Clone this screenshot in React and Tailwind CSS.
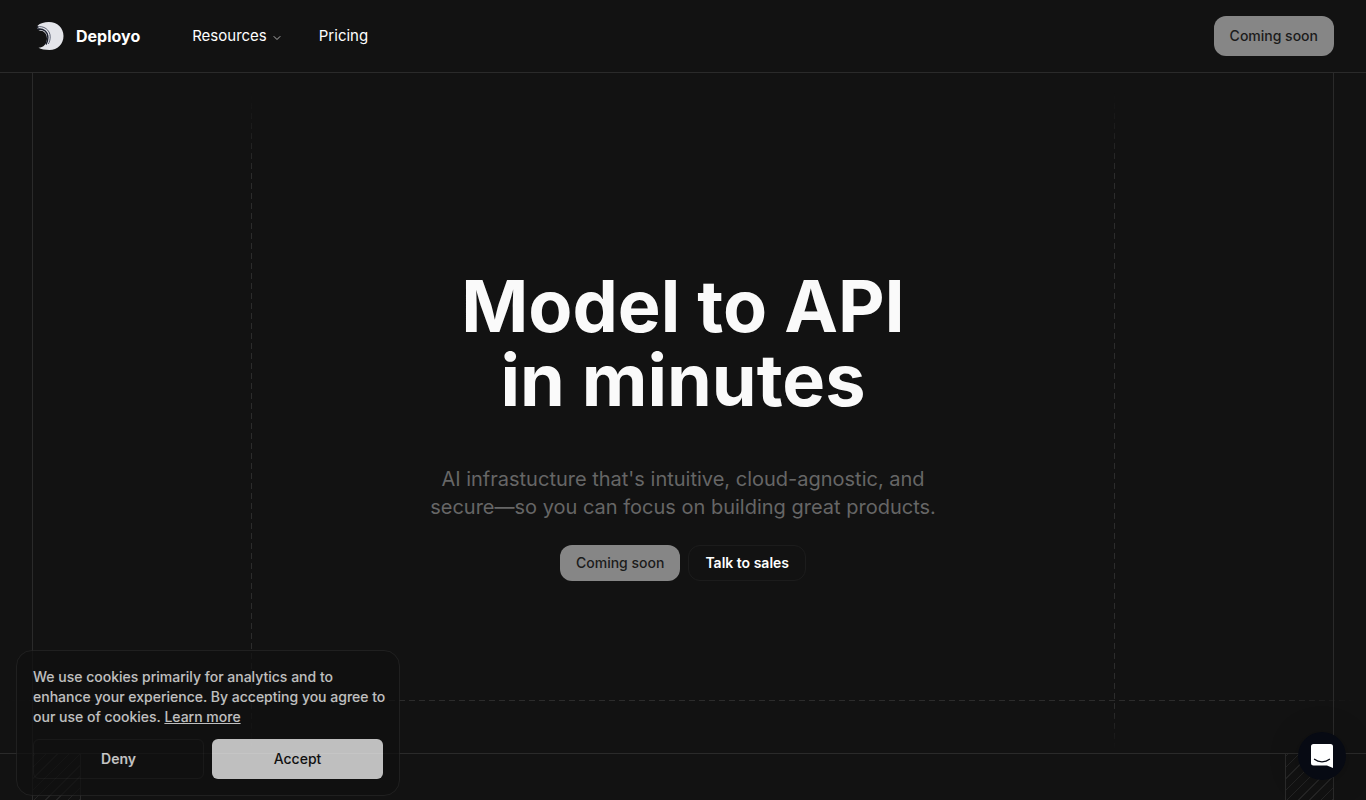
import { useState } from 'react';
import { ChevronDown } from 'lucide-react';

const Logo = () => (
  <svg viewBox="0 0 28 28" className="size-7" aria-hidden="true">
    <path
      d="M1.500 3.700C4 1.200 8.500 0 12.800 0C21.500 0 27.500 6 27.500 14S21.500 28 13.500 28C9 28 5 27.500 2.500 25.800C7.500 25.800 11 21.500 11 16.500C11 11.500 7.500 8.200 2.500 8.600L4.500 7.600C3.500 6.900 2.200 6.500 0.800 6.600L2.800 5.200Z"
      fill="#e4e5ea"
    />
    <path d="M0.800 5C7.500 3.200 14.200 7.800 14.200 14.800C14.200 17.500 13.500 20 12.300 22" fill="none" stroke="#3a4054" strokeWidth="0.8" />
    <path d="M1.500 7.200C7.500 6 11.800 10 11.900 15.500C11.900 18 11.300 20.500 10 22.500" fill="none" stroke="#1a1f2e" strokeWidth="1.400" />
  </svg>
);

const Header = () => (
  <header className="border-b border-[#2a2a2a]">
    <div className="flex h-18 items-center justify-between px-8">
      <div className="flex items-center">
        <a href="#" className="flex items-center gap-3 pl-1 font-bold">
          <Logo />
          Deployo
        </a>
        <nav className="ml-13 flex items-center gap-9 text-[15px]">
          <button type="button" className="flex items-center gap-1">
            Resources
            <ChevronDown className="mt-1 size-3 text-[#b0b0b0]" />
          </button>
          <a href="#pricing">Pricing</a>
        </nav>
      </div>
      <button type="button" className="h-10 rounded-xl bg-[#868686] px-4 text-sm font-medium text-[#1b1b1b]">
        Coming soon
      </button>
    </div>
  </header>
);

// Dashed guides that fade out at both ends
const Guides = () => (
  <div className="pointer-events-none absolute inset-0" aria-hidden="true">
    <div className="absolute top-5 bottom-1 left-[218px] w-px bg-[repeating-linear-gradient(to_bottom,#2c2c2c_0_6px,transparent_6px_10px)] mask-[linear-gradient(to_bottom,transparent,black_80px,black_calc(100%-40px),transparent)]" />
    <div className="absolute top-5 right-[218px] bottom-1 w-px bg-[repeating-linear-gradient(to_bottom,#2c2c2c_0_6px,transparent_6px_10px)] mask-[linear-gradient(to_bottom,transparent,black_80px,black_calc(100%-40px),transparent)]" />
    <div className="absolute -right-6 bottom-[52px] -left-6 h-px bg-[repeating-linear-gradient(to_right,#2c2c2c_0_6px,transparent_6px_10px)] mask-[linear-gradient(to_right,transparent,black_80px,black_calc(100%-80px),transparent)]" />
  </div>
);

const Hero = () => (
  <section className="relative mx-8 flex min-h-[680px] flex-col items-center justify-center border-x border-[#2a2a2a] text-center">
    <Guides />
    <h1 className="pt-6 text-7xl leading-[74px] font-bold text-[#fafafa]">
      Model to API
      <br />
      in minutes
    </h1>
    <p className="mt-12 max-w-[520px] text-xl leading-7 text-[#666666]">
      AI infrastucture that's intuitive, cloud-agnostic, and secure—so you can focus on building great products.
    </p>
    <div className="mt-6 flex gap-2 text-sm font-medium">
      <button type="button" className="h-9 rounded-xl bg-[#868686] px-4 text-[#1b1b1b]">
        Coming soon
      </button>
      <button type="button" className="h-9 rounded-xl border border-[#1c1c1c] px-4 font-semibold">
        Talk to sales
      </button>
    </div>
  </section>
);

const Hatch = () => (
  <div className="w-[47px] bg-[repeating-linear-gradient(-45deg,#242424_0_1px,transparent_1px_8px)]" />
);

const NextSection = () => (
  <section className="flex flex-1 border-t border-[#2a2a2a]">
    <div className="mx-8 flex flex-1 justify-between border-x border-[#2a2a2a]">
      <div className="flex border-r border-[#2a2a2a]">
        <Hatch />
      </div>
      <div className="flex border-l border-[#2a2a2a]">
        <Hatch />
      </div>
    </div>
  </section>
);

const CookieBanner = ({ onClose }) => (
  <div className="fixed bottom-1 left-4 w-96 rounded-2xl border border-[#262626] bg-[#111111] p-4 text-sm opacity-75">
    <p className="-mr-2 leading-5 font-medium text-[#fafafa]">
      We use cookies primarily for analytics and to enhance your experience. By accepting you agree to our use of
      cookies.{' '}
      <a href="#cookies" className="underline">
        Learn more
      </a>
    </p>
    <div className="mt-3 grid grid-cols-2 gap-2">
      <button type="button" onClick={onClose} className="h-10 rounded-md border border-[#1c1c1c] font-semibold">
        Deny
      </button>
      <button type="button" onClick={onClose} className="h-10 rounded-md bg-[#fafafa] font-medium text-[#111111]">
        Accept
      </button>
    </div>
  </div>
);

const ChatLauncher = () => (
  <button
    type="button"
    aria-label="Open chat"
    className="fixed right-5 bottom-5 flex size-12 items-center justify-center rounded-full bg-[#070a13] shadow-[0_2px_32px_rgba(0,0,0,0.2)]"
  >
    <svg viewBox="0 0 22 24" className="h-6 w-[22px]" aria-hidden="true">
      <path d="M2.500 0H19.500A2.500 2.500 0 0 1 22 2.500V24L16 21.500H2.500A2.500 2.500 0 0 1 0 19V2.500A2.500 2.500 0 0 1 2.500 0Z" fill="#fff" />
      <path d="M3.500 15.300C7.500 18.600 14.500 18.600 18.500 15.300" fill="none" stroke="#070a13" strokeWidth="1.3" strokeLinecap="round" />
    </svg>
  </button>
);

const App = () => {
  const [showCookies, setShowCookies] = useState(true);

  return (
    <div className="flex min-h-screen flex-col bg-[#121212] font-[Inter,sans-serif] text-white">
      <Header />
      <main className="flex flex-1 flex-col">
        <Hero />
        <NextSection />
      </main>
      {showCookies && <CookieBanner onClose={() => setShowCookies(false)} />}
      <ChatLauncher />
    </div>
  );
};

export default App;
